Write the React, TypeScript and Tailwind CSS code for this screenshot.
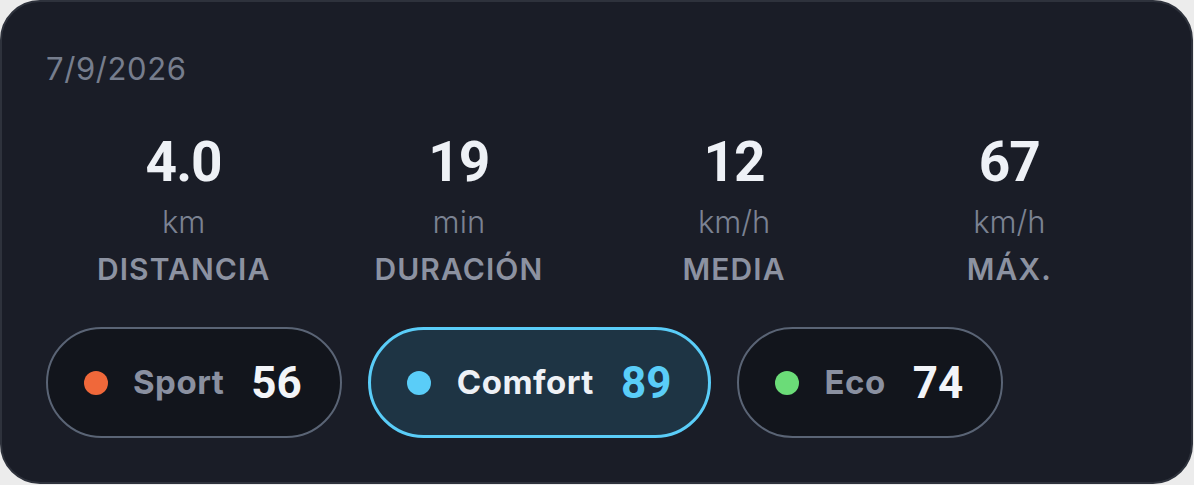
import React from "react";

const stats = [
  { value: "4.0", unit: "km", label: "DISTANCIA" },
  { value: "19", unit: "min", label: "DURACIÓN" },
  { value: "12", unit: "km/h", label: "MEDIA" },
  { value: "67", unit: "km/h", label: "MÁX." },
];

const modes = [
  { name: "Sport", score: "56", dot: "bg-[#f0683a]", active: false },
  { name: "Comfort", score: "89", dot: "bg-[#5acdf8]", active: true },
  { name: "Eco", score: "74", dot: "bg-[#6bdc78]", active: false },
];

export default function App() {
  return (
    <div className="w-[1194px] h-[485px] bg-[#ececec]">
      <div
        className="w-[1193px] h-[484px] rounded-[40px] border-2 border-[#2e323c] bg-[#1a1d27] px-[44px] pt-[49px]"
        style={{ fontFamily: "Inter, 'Noto Sans', sans-serif" }}
      >
        <div className="text-[31px] leading-[36px] text-[#767d8d] tracking-[0.6px]">7/9/2026</div>
        <div className="grid grid-cols-4 mt-[48px] text-center">
          {stats.map((s) => (
            <div key={s.label} className="flex flex-col items-center">
              <div
                className="text-[55px] leading-[54px] font-bold text-[#eef1f6] tracking-[-1px]"
                style={{ fontFamily: "Roboto, sans-serif" }}
              >
                {s.value}
              </div>
              <div className="text-[31px] leading-[34px] mt-[16px] text-[#7b8292] font-light">{s.unit}</div>
              <div className="text-[30px] leading-[34px] mt-[13px] font-semibold text-[#8c92a1] tracking-[1.1px]">
                {s.label}
              </div>
            </div>
          ))}
        </div>
        <div className="flex gap-[26px] mt-[41px]">
          {modes.map((m) => (
            <div
              key={m.name}
              className={
                m.active
                  ? "h-[111px] rounded-full border-[3px] border-[#5acdf8] bg-[#1e3444] flex items-center pl-[36px] pr-[37px]"
                  : "h-[111px] rounded-full border-2 border-[#5a6475] bg-[#12151c] flex items-center pl-[36px] pr-[38px]"
              }
            >
              <div className={`w-[24px] h-[24px] rounded-full ${m.dot}`} />
              <div
                className={
                  m.active
                    ? "ml-[26px] text-[33px] font-bold text-[#eef1f6] tracking-[0.5px]"
                    : "ml-[25px] text-[33px] font-bold text-[#8a90a0] tracking-[0.5px]"
                }
              >
                {m.name}
              </div>
              <div
                className={
                  m.active
                    ? "ml-[27px] text-[44px] font-bold text-[#5acdf8]"
                    : "ml-[27px] text-[44px] font-bold text-[#f2f4f8]"
                }
                style={{ fontFamily: "Roboto, sans-serif" }}
              >
                {m.score}
              </div>
            </div>
          ))}
        </div>
      </div>
    </div>
  );
}
